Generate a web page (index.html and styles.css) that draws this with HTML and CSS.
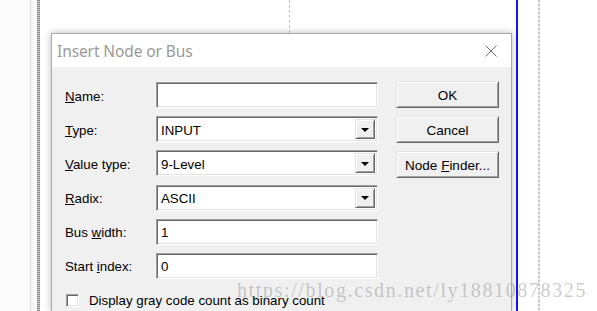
FILE: index.html
```html
<!DOCTYPE html>
<html>
<head>
<meta charset="utf-8">
<link rel="stylesheet" href="styles.css">
</head>
<body>
<div class="workspace">
  <div class="margin-strip"></div>
  <div class="rule"></div>
  <div class="gutter"></div>
  <div class="dash-rule"></div>
  <div class="page-a"></div>
  <div class="page-b"></div>
  <div class="blue-rule"></div>
  <div class="page-c"></div>
  <div class="dash-rule light"></div>
  <div class="page-d"></div>
</div>

<div class="dialog">
  <div class="titlebar">
    <span class="title">Insert Node or Bus</span>
    <svg class="close" width="12" height="12" viewBox="0 0 12 12"><path d="M0.5 0.5 L11.5 11.5 M11.5 0.5 L0.5 11.5" stroke="#6f6f6f" stroke-width="1" fill="none"/></svg>
  </div>
  <div class="dialog-body">
    <div class="form">
      <div class="fields">
        <label class="lbl"><u>N</u>ame:</label>
        <div class="field"></div>

        <label class="lbl"><u>T</u>ype:</label>
        <div class="field select"><span class="val">INPUT</span><span class="drop"><span class="tri"></span></span></div>

        <label class="lbl"><u>V</u>alue type:</label>
        <div class="field select"><span class="val">9-Level</span><span class="drop"><span class="tri"></span></span></div>

        <label class="lbl"><u>R</u>adix:</label>
        <div class="field select"><span class="val">ASCII</span><span class="drop"><span class="tri"></span></span></div>

        <label class="lbl">Bus <u>w</u>idth:</label>
        <div class="field"><span class="val">1</span></div>

        <label class="lbl">Start <u>i</u>ndex:</label>
        <div class="field"><span class="val">0</span></div>
      </div>
      <div class="check-row">
        <span class="checkbox"></span>
        <span class="check-label">Display gray code count as binary count</span>
      </div>
    </div>
    <div class="actions">
      <div class="btn"><span>OK</span></div>
      <div class="btn"><span>Cancel</span></div>
      <div class="btn"><span>Node <u>F</u>inder...</span></div>
    </div>
  </div>
</div>

<div class="watermark">https://blog.csdn.net/ly18810878325</div>
</body>
</html>
```

FILE: styles.css
```css
html, body {
  margin: 0;
  padding: 0;
}
body {
  width: 597px;
  height: 311px;
  overflow: hidden;
  position: relative;
  background: #ffffff;
  font-family: "Liberation Sans", Arial, sans-serif;
}

/* background workspace */
.workspace {
  display: flex;
  height: 311px;
}
.margin-strip {
  width: 30px;
  background: #fbfbfb;
}
.rule {
  width: 1px;
  background: #e2e2e2;
}
.gutter {
  width: 6px;
  background: #f6f6f6;
}
.dash-rule {
  width: 3px;
  background: repeating-linear-gradient(to bottom, #8c8c8c 0 1px, #c4c4c4 1px 2px);
}
.dash-rule.light {
  width: 2px;
  background: repeating-linear-gradient(to bottom, #c6c6c6 0 2px, #ececec 2px 4px);
}
.page-a {
  width: 249px;
  border-right: 1px dashed #c2c2c2;
}
.page-b {
  width: 226px;
}
.blue-rule {
  width: 2px;
  background: #1414ff;
}
.page-c {
  width: 20px;
}
.page-d {
  flex: 1;
}

/* dialog window */
.dialog {
  position: absolute;
  left: 51px;
  top: 33px;
  width: 459px;
  height: 277px;
  border: 1px solid #a9a9a9;
  border-bottom: none;
  background: #f0f0f0;
  box-shadow: 0 0 7px rgba(0, 0, 0, 0.28);
  overflow: hidden;
}
.titlebar {
  height: 33px;
  background: #ffffff;
  display: flex;
  align-items: center;
  justify-content: space-between;
  padding: 0 14px 0 5px;
}
.title {
  font-family: "Noto Sans", "Open Sans", sans-serif;
  font-size: 15.5px;
  color: #9a9a9a;
  letter-spacing: -0.1px;
}
.close {
  display: block;
}

.dialog-body {
  display: flex;
  padding: 14px 0 0 13px;
  font-size: 13.3px;
  color: #000;
}
.form {
  display: flex;
  flex-direction: column;
  padding-top: 1px;
}
.fields {
  display: grid;
  grid-template-columns: 91px 222px;
  grid-auto-rows: 26px;
  row-gap: 8.2px;
  align-items: center;
}
.lbl {
  white-space: nowrap;
  padding-top: 2px;
}
.field {
  height: 26px;
  box-sizing: border-box;
  background: #ffffff;
  border-top: 1px solid #a0a0a0;
  border-left: 1px solid #a0a0a0;
  border-bottom: 1px solid #ffffff;
  border-right: 1px solid #ffffff;
  box-shadow: inset 1px 1px 0 #696969, inset -1px -1px 0 #e3e3e3;
  display: flex;
  align-items: center;
  padding: 3px 2px 2px 4px;
}
.val {
  flex: 1;
  white-space: nowrap;
}
.select {
  padding: 2px 2px 2px 4px;
}
.select .val {
  padding-top: 2px;
}
.drop {
  align-self: stretch;
  width: 20px;
  box-sizing: border-box;
  background: #f0f0f0;
  border-top: 1px solid #e3e3e3;
  border-left: 1px solid #e3e3e3;
  border-bottom: 1px solid #696969;
  border-right: 1px solid #696969;
  box-shadow: inset 1px 1px 0 #ffffff, inset -1px -1px 0 #a0a0a0;
  display: flex;
  align-items: center;
  justify-content: center;
}
.tri {
  width: 0;
  height: 0;
  border-left: 4px solid transparent;
  border-right: 4px solid transparent;
  border-top: 4px solid #000;
  margin-top: 1px;
}

.check-row {
  display: flex;
  align-items: center;
  gap: 10px;
  margin-top: 14px;
  padding-left: 1px;
}
.checkbox {
  width: 13px;
  height: 13px;
  box-sizing: border-box;
  background: #fff;
  border-top: 1px solid #a0a0a0;
  border-left: 1px solid #a0a0a0;
  border-bottom: 1px solid #fff;
  border-right: 1px solid #fff;
  box-shadow: inset 1px 1px 0 #696969, inset -1px -1px 0 #e3e3e3;
}
.check-label {
  white-space: nowrap;
}

.actions {
  display: flex;
  flex-direction: column;
  gap: 8px;
  margin-left: 18px;
}
.btn {
  width: 103px;
  height: 27px;
  box-sizing: border-box;
  background: #f0f0f0;
  border-top: 1px solid #e3e3e3;
  border-left: 1px solid #e3e3e3;
  border-bottom: 1px solid #696969;
  border-right: 1px solid #696969;
  box-shadow: inset 1px 1px 0 #ffffff, inset -1px -1px 0 #a0a0a0;
  display: flex;
  align-items: center;
  justify-content: center;
  white-space: nowrap;
  font-size: 13.5px;
  padding-top: 1px;
}

.watermark {
  position: absolute;
  left: 237px;
  top: 279px;
  font-family: "Liberation Serif", "Times New Roman", serif;
  font-size: 20px;
  letter-spacing: 1.62px;
  color: rgba(120, 120, 120, 0.38);
  white-space: nowrap;
  pointer-events: none;
}
```
